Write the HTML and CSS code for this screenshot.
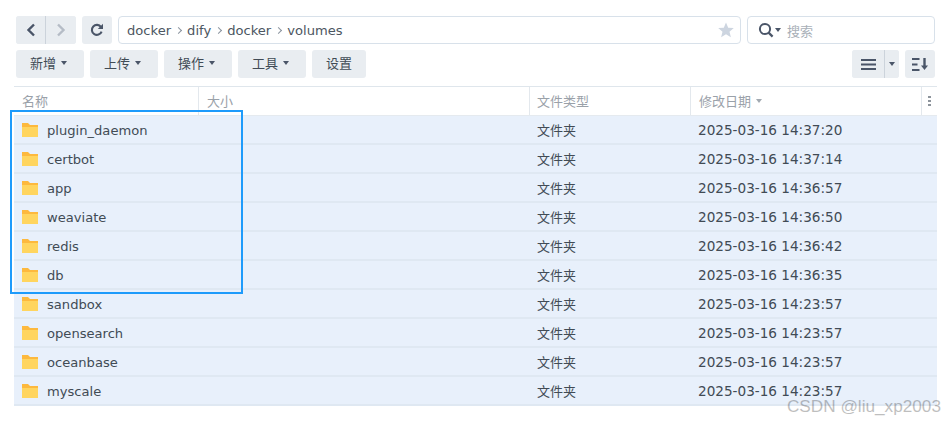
FILE: index.html
```html
<!DOCTYPE html>
<html lang="zh">
<head>
<meta charset="utf-8">
<title>File Station</title>
<link rel="stylesheet" href="styles.css">
</head>
<body>
<div class="page">
  <div class="bar">
    <div class="btn-group nav">
      <button class="seg"><svg width="12" height="14" viewBox="0 0 12 14"><path d="M9 1.500 3.500 7 9 12.500" fill="none" stroke="#4a5568" stroke-width="2.400"/></svg></button>
      <button class="seg"><svg width="12" height="14" viewBox="0 0 12 14"><path d="M3 1.500 8.500 7 3 12.500" fill="none" stroke="#b5bcc6" stroke-width="2.400"/></svg></button>
    </div>
    <button class="btn refresh"><svg width="14" height="14" viewBox="0 0 14 14"><path d="M11.600 8.600A5 5 0 1 1 11 4" fill="none" stroke="#4a5568" stroke-width="2.100"/><path d="M13 .8V6H7.800z" fill="#4a5568"/></svg></button>
    <div class="path">
      <span>docker</span><i class="sep"></i><span>dify</span><i class="sep"></i><span>docker</span><i class="sep"></i><span>volumes</span>
      <svg class="star" width="16" height="16" viewBox="0 0 16 16"><path d="M8 .5 10.200 5.700 15.800 6.100 11.500 9.700 12.900 15.200 8 12.300 3.100 15.200 4.500 9.700.2 6.100 5.800 5.700z" fill="#cdd5e0"/></svg>
    </div>
    <div class="search">
      <svg width="16" height="16" viewBox="0 0 16 16"><circle cx="7" cy="7" r="5.100" fill="none" stroke="#4a5568" stroke-width="2"/><path d="m10.600 10.600 4 4" stroke="#4a5568" stroke-width="2.200"/></svg>
      <i class="caret"></i>
      <span class="hint">搜索</span>
    </div>
  </div>
  <div class="bar tools">
    <button class="btn menu"><span>新增</span><i class="caret"></i></button>
    <button class="btn menu"><span>上传</span><i class="caret"></i></button>
    <button class="btn menu"><span>操作</span><i class="caret"></i></button>
    <button class="btn menu"><span>工具</span><i class="caret"></i></button>
    <button class="btn plain"><span>设置</span></button>
    <div class="spacer"></div>
    <div class="btn-group view">
      <button class="seg list"><svg width="15" height="11" viewBox="0 0 15 11"><path d="M0 1h15M0 5.500h15M0 10h15" stroke="#4a5568" stroke-width="2"/></svg></button>
      <button class="seg drop"><i class="caret"></i></button>
    </div>
    <button class="btn sort"><svg width="16" height="13" viewBox="0 0 16 13"><path d="M0 1h7.500M0 6.500h5.500M0 12h7.500" stroke="#4a5568" stroke-width="2"/><path d="M12.500 0v9" stroke="#4a5568" stroke-width="2.400"/><path d="M9 7.500h7l-3.500 4.500z" fill="#4a5568"/></svg></button>
  </div>
  <div class="table">
    <div class="row head">
      <div class="name">名称</div><div class="size">大小</div><div class="type">文件类型</div><div class="date">修改日期<i class="caret light"></i></div>
      <div class="more"><i></i><i></i><i></i></div>
    </div>
    <div class="row"><div class="name"><svg class="folder" viewBox="0 0 16 14"><use href="#fd"/></svg>plugin_daemon</div><div class="size"></div><div class="type"><span>文件夹</span></div><div class="date">2025-03-16 14:37:20</div></div>
    <div class="row"><div class="name"><svg class="folder" viewBox="0 0 16 14"><use href="#fd"/></svg>certbot</div><div class="size"></div><div class="type"><span>文件夹</span></div><div class="date">2025-03-16 14:37:14</div></div>
    <div class="row"><div class="name"><svg class="folder" viewBox="0 0 16 14"><use href="#fd"/></svg>app</div><div class="size"></div><div class="type"><span>文件夹</span></div><div class="date">2025-03-16 14:36:57</div></div>
    <div class="row"><div class="name"><svg class="folder" viewBox="0 0 16 14"><use href="#fd"/></svg>weaviate</div><div class="size"></div><div class="type"><span>文件夹</span></div><div class="date">2025-03-16 14:36:50</div></div>
    <div class="row"><div class="name"><svg class="folder" viewBox="0 0 16 14"><use href="#fd"/></svg>redis</div><div class="size"></div><div class="type"><span>文件夹</span></div><div class="date">2025-03-16 14:36:42</div></div>
    <div class="row"><div class="name"><svg class="folder" viewBox="0 0 16 14"><use href="#fd"/></svg>db</div><div class="size"></div><div class="type"><span>文件夹</span></div><div class="date">2025-03-16 14:36:35</div></div>
    <div class="row"><div class="name"><svg class="folder" viewBox="0 0 16 14"><use href="#fd"/></svg>sandbox</div><div class="size"></div><div class="type"><span>文件夹</span></div><div class="date">2025-03-16 14:23:57</div></div>
    <div class="row"><div class="name"><svg class="folder" viewBox="0 0 16 14"><use href="#fd"/></svg>opensearch</div><div class="size"></div><div class="type"><span>文件夹</span></div><div class="date">2025-03-16 14:23:57</div></div>
    <div class="row"><div class="name"><svg class="folder" viewBox="0 0 16 14"><use href="#fd"/></svg>oceanbase</div><div class="size"></div><div class="type"><span>文件夹</span></div><div class="date">2025-03-16 14:23:57</div></div>
    <div class="row"><div class="name"><svg class="folder" viewBox="0 0 16 14"><use href="#fd"/></svg>myscale</div><div class="size"></div><div class="type"><span>文件夹</span></div><div class="date">2025-03-16 14:23:57</div></div>
  </div>
  <div class="highlight"></div>
  <div class="watermark">CSDN @liu_xp2003</div>
</div>
<svg class="defs" width="0" height="0"><defs><g id="fd"><path d="M0 0h6l2 2h8v12H0z" fill="#fdb93e"/><path d="M0 4h16v10H0z" fill="#ffd55f"/></g></defs></svg>
</body>
</html>
```
FILE: styles.css
```css
* { box-sizing: border-box; }
html, body { margin: 0; padding: 0; background: #fff; }
body { width: 944px; height: 422px; overflow: hidden; font-family: "DejaVu Sans", "Noto Sans CJK SC", sans-serif; font-size: 13.100px; color: #414b55; }
.page { position: relative; padding: 16px 7px 0 14px; height: 422px; }
.bar { display: flex; gap: 6px; height: 28px; margin-left: 2px; margin-right: 2px; }
.tools { margin-top: 6px; }
.spacer { flex: 1; }
button { font: inherit; color: inherit; border: 0; padding: 0; margin: 0; background: #e9edf1; }
.btn, .btn-group { background: #e9edf1; border-radius: 3px; height: 28px; display: flex; align-items: center; justify-content: center; }
.btn span { font-size: 13px; margin-top: -3px; }
.btn-group { overflow: hidden; }
.seg { height: 28px; display: flex; align-items: center; justify-content: center; }
.nav { width: 60px; }
.nav .seg { width: 30px; }
.nav .seg:first-child { border-right: 1px solid #ccd3db; }
.refresh { width: 30px; }
.path { width: 623px; border: 1px solid #d8e1ea; border-radius: 4px; display: flex; align-items: center; padding: 0 8px; color: #4c5661; }
.sep { width: 5px; height: 5px; border-top: 1px solid #8a939e; border-right: 1px solid #8a939e; transform: rotate(45deg); margin: 0 6px 0 5px; }
.star { margin-left: auto; margin-right: -2px; }
.search { width: 188px; border: 1px solid #d8e1ea; border-radius: 4px; display: flex; align-items: center; padding: 0 10px; }
.search .caret { margin-left: 1px; }
.hint { color: #a9b0b8; margin-left: 6px; font-size: 13px; }
.caret { display: inline-block; width: 0; height: 0; border: 3.500px solid transparent; border-top: 4px solid #4a5568; border-bottom: 0; margin-left: 5px; }
.caret.light { border-top-color: #a2a9b1; margin-left: 5px; }
.menu { width: 68px; padding-right: 3px; }
.menu .caret { margin-top: -2px; }
.plain { width: 54px; }
.view { width: 47px; }
.list { width: 32px; }
.drop { width: 15px; position: relative; border-left: 1px solid #ccd3db; }
.drop .caret { margin: 0; }
.sort { width: 30px; }
.table { margin-top: 8px; border-top: 1px solid #dfe6ec; width: 923px; }
.row { display: flex; height: 29px; align-items: center; background: #e8f0fb; border-bottom: 2px solid #dfe8f2; position: relative; padding-top: 1px; }
.row > div { height: 27px; display: flex; align-items: center; }
.head { background: #fff; border-bottom: 1px solid #e5eaef; height: 29px; color: #9aa1a9; font-size: 13px; padding-top: 0; }
.head > div { border-right: 1px solid #e3e8ed; height: 28px; padding-bottom: 1px; }
.name { width: 185px; padding-left: 8px; }
.size { width: 331px; padding-left: 8px; }
.type { width: 161px; padding-left: 7px; font-size: 13px; }
.type span { margin-top: -2px; }
.date { width: 231px; padding-left: 8px; }
.row:not(.head) .date { padding-left: 7px; font-size: 13.600px; }
.head .more { border-right: 0; flex: 1; flex-direction: column; justify-content: center; gap: 2px; }
.more i { display: block; width: 3px; height: 2px; background: #8d949c; }
.folder { width: 16px; height: 14px; margin-right: 9px; flex: none; }
.highlight { position: absolute; left: 10px; top: 110px; width: 233px; height: 184px; border: 2px solid #1e9bfb; }
.watermark { position: absolute; right: 3px; top: 396px; font-family: "Liberation Sans", sans-serif; font-size: 17.200px; color: #000; opacity: .25; }
.defs { position: absolute; }
```
